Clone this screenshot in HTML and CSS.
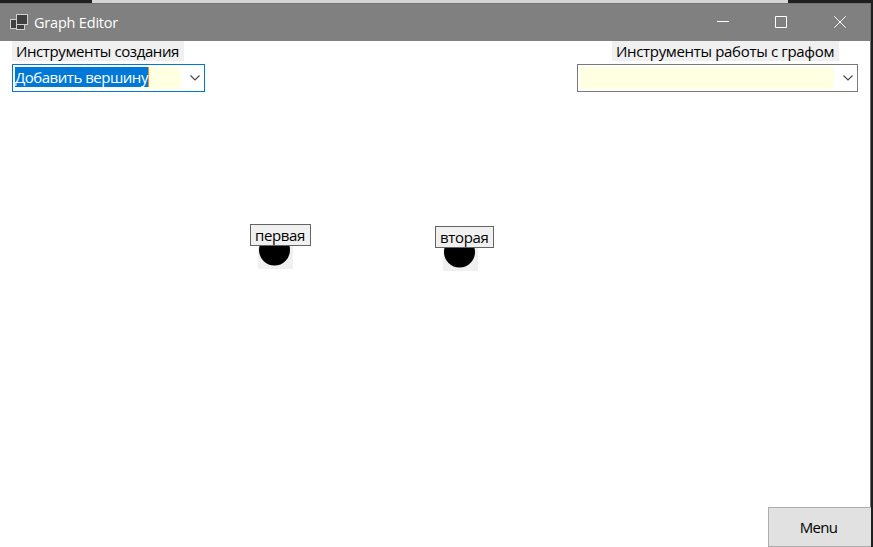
FILE: index.html
```html
<!DOCTYPE html>
<html lang="ru">
<head>
<meta charset="utf-8">
<title>Graph Editor</title>
<link rel="stylesheet" href="styles.css">
</head>
<body>
<div class="desktop-strip"></div>
<main class="window">
  <header class="titlebar">
    <svg class="app-icon" width="18" height="17" viewBox="0 0 18 17">
      <g fill="#404040" stroke="#d0d0d0">
        <rect x="6.5" y="10.5" width="8" height="5"/>
        <rect x=".5" y="5.5" width="6" height="9"/>
        <rect x="6.5" y=".5" width="11" height="10"/>
      </g>
    </svg>
    <h1 class="title">Graph Editor</h1>
    <div class="caption-buttons">
      <button class="caption" aria-label="Minimize"><svg width="12" height="12"><path d="M0 5.5h12"/></svg></button>
      <button class="caption" aria-label="Maximize"><svg width="12" height="12"><path d="M.5.5h11v11H.5z"/></svg></button>
      <button class="caption" aria-label="Close"><svg width="12" height="12"><path d="M.3.3l11.4 11.4M11.7.3L.3 11.7"/></svg></button>
    </div>
  </header>
  <section class="client">
    <div class="tools">
      <div class="tool tool-create">
        <div class="label"><span>Инструменты создания</span></div>
        <div class="combo combo-active">
          <div class="field"><span class="selection">Добавить вершину</span></div>
          <svg class="chevron" width="10" height="6"><path d="M.5.5L5 5 9.5.5"/></svg>
        </div>
      </div>
      <div class="tool tool-work">
        <div class="label"><span>Инструменты работы с графом</span></div>
        <div class="combo">
          <div class="field"></div>
          <svg class="chevron" width="10" height="6"><path d="M.5.5L5 5 9.5.5"/></svg>
        </div>
      </div>
    </div>
    <div class="node node-first">
      <div class="node-name">первая</div>
      <div class="vertex"><svg width="35" height="23"><circle cx="16.5" cy="4" r="15.5"/></svg></div>
    </div>
    <div class="node node-second">
      <div class="node-name">вторая</div>
      <div class="vertex"><svg width="35" height="23"><circle cx="16.5" cy="4" r="15.5"/></svg></div>
    </div>
    <button class="menu">Menu</button>
  </section>
</main>
</body>
</html>
```
FILE: styles.css
```css
* { box-sizing: border-box; }
body {
  margin: 0;
  width: 873px;
  height: 547px;
  overflow: hidden;
  background: #1f1f1f;
  color: #000;
  font: 15px/20px "Open Sans", "Noto Sans", sans-serif;
}
.desktop-strip { height: 3px; margin: 0 85px 0 92px; background: #d5d5d5; }
.window {
  display: flex;
  flex-direction: column;
  width: 871px;
  height: 544px;
  border-right: 1px solid #707070;
  background: #fff;
}
.titlebar {
  display: flex;
  align-items: center;
  height: 38px;
  flex: none;
  padding: 0 1px 0 10px;
  border-top: 1px solid #747474;
  background: #808080;
}
.app-icon { margin-bottom: 1px; }
.title { margin: 0 0 0 6px; color: #fff; font-size: 14.5px; font-weight: 400; white-space: nowrap; letter-spacing: -.2px; }
.caption-buttons { display: flex; margin: -1px 0 0 auto; }
.caption {
  display: flex;
  align-items: center;
  justify-content: center;
  width: 58.5px;
  height: 36px;
  padding: 0;
  border: 0;
  background: none;
}
.caption path { fill: none; stroke: #fff; }
.client { position: relative; display: flex; flex-direction: column; flex: 1; }
.tools { display: flex; justify-content: space-between; padding: 0 12px; }
.tool { display: flex; flex-direction: column; gap: 3px; }
.tool-create { width: 193px; }
.tool-work { width: 281px; }
.label { height: 20px; padding-left: 4px; background: #f0f0f0; white-space: nowrap; }
.tool-create .label { width: 172px; letter-spacing: -.4px; }
.tool-work .label { width: 227px; margin-left: 35px; letter-spacing: -.33px; }
.combo {
  display: flex;
  align-items: center;
  height: 28px;
  padding: 2px 4.5px 2px 2px;
  border: 1px solid #7a7a7a;
}
.combo-active { border-color: #0078d7; }
.field { flex: 1; height: 22px; margin-right: 8.5px; background: #ffffe1; white-space: nowrap; }
.selection {
  display: inline-block;
  height: 20px;
  width: 134px;
  border-right: 1px solid #ff8728;
  background: #0078d7;
  color: #fff;
  letter-spacing: -.48px;
}
.chevron { flex: none; }
.chevron path { fill: none; stroke: #444; stroke-width: 1.1; }
.node { position: absolute; }
.node-first { left: 250px; top: 183px; width: 61px; }
.node-second { left: 435px; top: 185px; width: 59px; }
.node-name {
  height: 22px;
  padding-left: 4px;
  border: 1px solid #646464;
  background: #f0f0f0;
  line-height: 20px;
  letter-spacing: -.35px;
}
.vertex { width: 35px; height: 23px; margin-left: 8px; background: #f0f0f0; }
.vertex svg { display: block; }
.menu {
  align-self: flex-end;
  width: 103px;
  height: 40px;
  margin: auto -1px 0 0;
  padding: 0 3px 0 0;
  border: 1px solid #adadad;
  border-right: 0;
  background: #e1e1e1;
  color: #000;
  font: inherit;
  letter-spacing: -.7px;
}
```
